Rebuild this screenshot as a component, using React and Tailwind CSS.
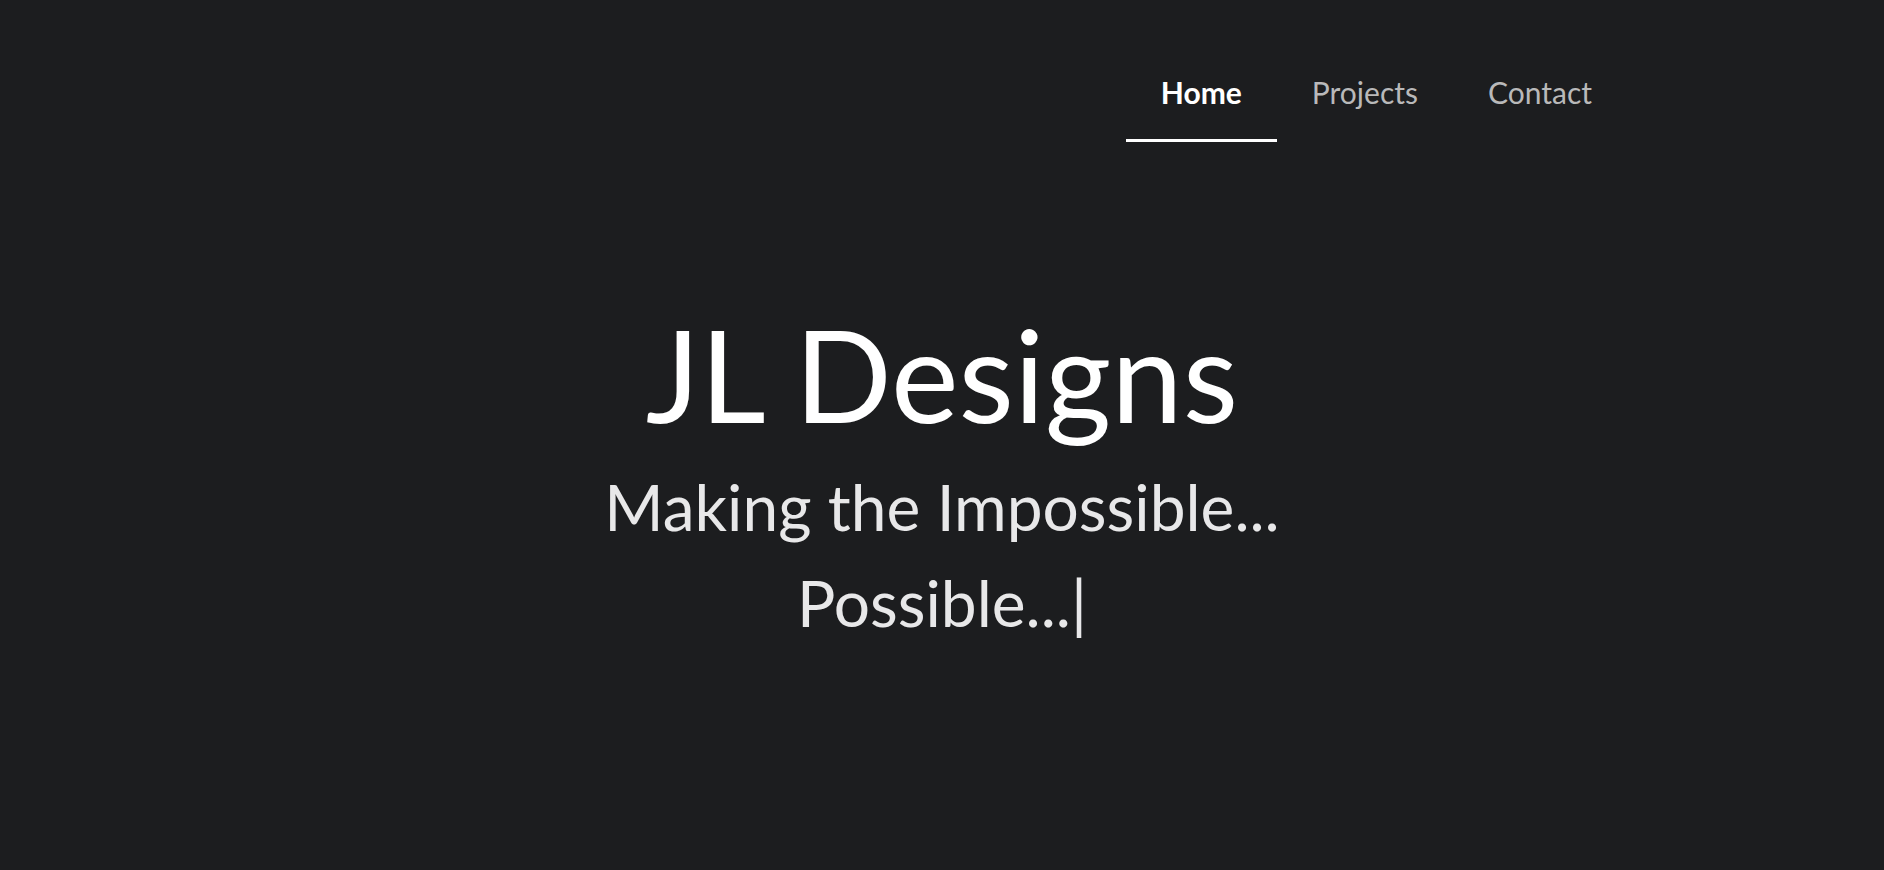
export default function App() {
  const links = [
    { label: 'Home', active: true },
    { label: 'Projects' },
    { label: 'Contact' },
  ];

  return (
    <div
      className="min-h-screen w-full bg-[#1c1d1f] text-white"
      style={{ fontFamily: 'Lato, "Open Sans", sans-serif' }}
    >
      {/* top nav */}
      <nav className="flex justify-end pr-[257px] pt-[74px]">
        {links.map((l) => (
          <a
            key={l.label}
            href="#"
            className={
              l.active
                ? 'px-[35px] pb-[29px] text-[30px] leading-[36px] font-bold text-white border-b-[3px] border-white'
                : 'px-[35px] pb-[29px] text-[30px] leading-[36px] text-[#b9b9ba] border-b-[3px] border-transparent'
            }
          >
            {l.label}
          </a>
        ))}
      </nav>

      {/* hero */}
      <main className="flex flex-col items-center pt-[155px]">
        <h1 className="text-[128px] leading-[1.2] font-normal text-white">JL Designs</h1>
        <p className="mt-[8px] text-[64px] leading-[96px] text-[#e8e8e9] text-center">
          Making the Impossible...
          <br />
          Possible...|
        </p>
      </main>
    </div>
  );
}
